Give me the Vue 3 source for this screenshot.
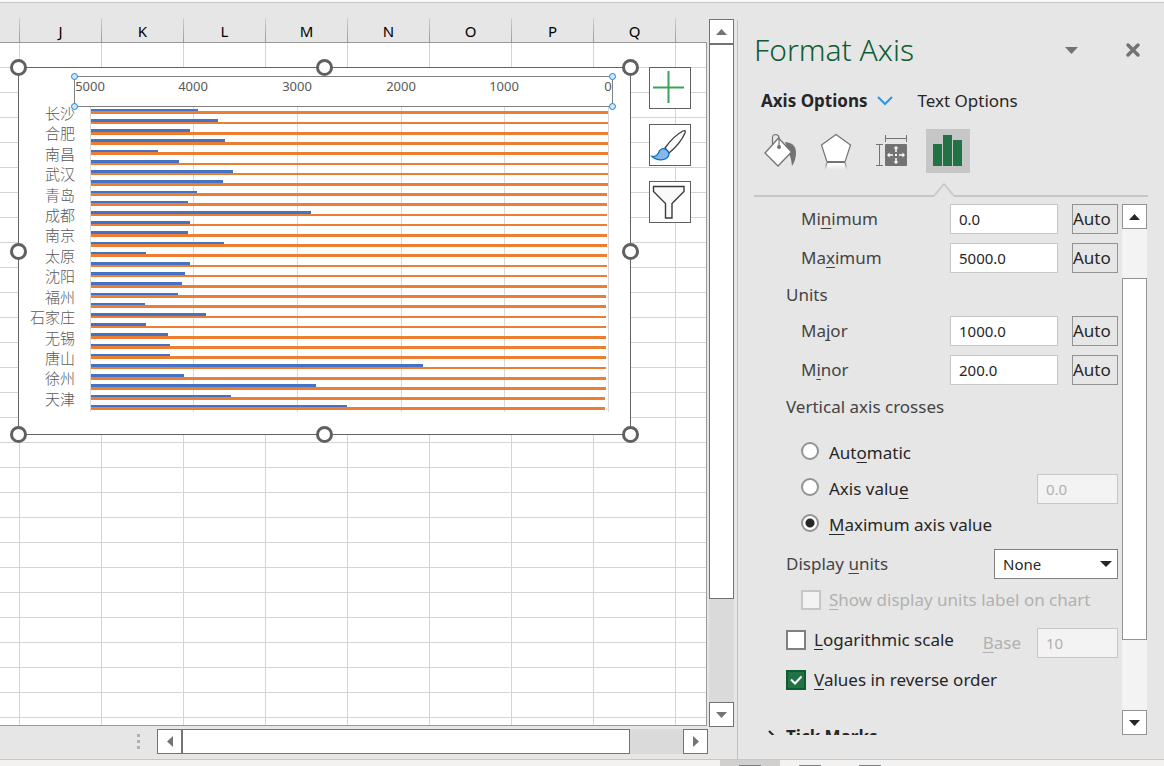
<script setup>
import { ref } from 'vue'

const columns = ['J', 'K', 'L', 'M', 'N', 'O', 'P', 'Q']

const pitch = 10.207
const barEnds = [
  198, 218, 190, 225, 158, 179, 233, 223, 197, 188, 311, 190, 188, 224, 146,
  190, 185, 182, 178, 145, 206, 146, 168, 170, 170, 423, 184, 316, 231, 347,
]
const bars = barEnds.map((end, i) => {
  const top = Math.round(108.86 + pitch * i)
  const mid = Math.round(111.48 + pitch * i)
  const bottom = Math.round(114.15 + pitch * i)
  return { top, mid, bottom, width: end - 91, full: Math.round(608.2 - 0.1 * i) - 91 }
})
const cities = ['长沙', '合肥', '南昌', '武汉', '青岛', '成都', '南京', '太原', '沈阳', '福州', '石家庄', '无锡', '唐山', '徐州', '天津']
  .map((name, i) => ({ name, y: Math.round(119 + pitch * 2 * i) }))
const ticks = [
  { x: 90, label: '5000' },
  { x: 193, label: '4000' },
  { x: 297, label: '3000' },
  { x: 401, label: '2000' },
  { x: 504, label: '1000' },
  { x: 608, label: '0' },
]
const handles = [
  [18, 67], [324, 67], [630, 67], [18, 251], [630, 251], [18, 434], [324, 434], [630, 434],
]
const axisHandles = [[74, 76], [612, 76], [74, 106], [612, 106]]

const minimum = ref('0.0')
const maximum = ref('5000.0')
const major = ref('1000.0')
const minor = ref('200.0')
const axisValue = ref('0.0')
const logBase = ref('10')
const crosses = ref('max')
const displayUnits = ref('None')
const showLabel = ref(false)
const logarithmic = ref(false)
const reversed = ref(true)
</script>

<template>
  <div class="app">
    <div class="ribbon-edge"></div>
    <main class="main">
      <section class="workbook">
        <div class="sheet-row">
          <div class="sheet">
            <div class="headers">
              <div class="header first"></div>
              <div v-for="c in columns" :key="c" class="header">{{ c }}</div>
            </div>
            <div class="cells"></div>

            <svg class="chart" width="640" height="444" viewBox="0 0 640 444" role="img" aria-label="City bar chart">
              <rect x="18.500" y="67.500" width="612" height="367" fill="#fff" stroke="#636363" />
              <g fill="#d9d9d9">
                <rect v-for="t in ticks" :key="t.x" :x="t.x" y="107" width="1" height="305" />
              </g>
              <g v-for="(b, i) in bars" :key="i" shape-rendering="crispEdges">
                <rect x="91" :y="b.top" :width="b.width" :height="b.mid - b.top" fill="#4472c4" />
                <rect x="91" :y="b.mid" :width="b.full" :height="b.bottom - b.mid" fill="#ed7d31" />
              </g>
              <g class="city">
                <text v-for="c in cities" :key="c.name" x="75" :y="c.y">{{ c.name }}</text>
              </g>
              <g class="tick">
                <text v-for="t in ticks" :key="t.label" :x="t.x" y="91">{{ t.label }}</text>
              </g>
              <rect x="74.500" y="76.500" width="538" height="30" fill="none" stroke="#7f7f7f" />
              <circle v-for="(h, i) in axisHandles" :key="'a' + i" :cx="h[0] + 0.5" :cy="h[1] + 0.5" r="3" fill="#cfe6f7" stroke="#1a86d9" />
              <circle v-for="(h, i) in handles" :key="'h' + i" :cx="h[0] + 0.5" :cy="h[1] + 0.5" r="7" fill="#fff" stroke="#606060" stroke-width="3" />
            </svg>

            <div class="chart-tools">
              <button type="button" aria-label="Chart Elements">
                <svg width="40" height="40" viewBox="0 0 40 40" fill="none" stroke="#3aa356" stroke-width="2">
                  <path d="M18.500 3V35M3 19.500H34" />
                </svg>
              </button>
              <button type="button" aria-label="Chart Styles">
                <svg width="40" height="40" viewBox="0 0 40 40">
                  <path d="M15 23C20 16 27 9 33 6Q36 4.500 35 8C32 15 25 23 19 28Z" fill="#fafafa" stroke="#3b3b3b" stroke-width="1.300" />
                  <path d="M2 31.500Q6 32 8.500 28C9.500 24 13 22.500 16 24.500Q20 27 18.500 31C16 36 7 36 2 31.500Z" fill="#83b9ea" stroke="#1068b8" stroke-width="1.300" />
                </svg>
              </button>
              <button type="button" aria-label="Chart Filters">
                <svg width="40" height="40" viewBox="0 0 40 40" fill="#fafafa" stroke="#3b3b3b" stroke-width="1.400">
                  <path d="M3.500 4.500H34V9.500L22 21.500V36H15.500V21.500L3.500 9.500Z" />
                </svg>
              </button>
            </div>
          </div>

          <div class="vscroll">
            <button type="button" aria-label="Scroll up">
              <svg width="11" height="6"><path d="M0 6L5.500 0L11 6Z" fill="#737373" /></svg>
            </button>
            <div class="thumb"></div>
            <div class="track"></div>
            <button type="button" aria-label="Scroll down">
              <svg width="11" height="6"><path d="M0 0L5.500 6L11 0Z" fill="#737373" /></svg>
            </button>
          </div>
        </div>

        <div class="hscroll">
          <div class="grip"><i></i><i></i><i></i></div>
          <button type="button" aria-label="Scroll left">
            <svg width="6" height="11"><path d="M6 0L0 5.500L6 11Z" fill="#737373" /></svg>
          </button>
          <div class="thumb"></div>
          <div class="track"></div>
          <button type="button" aria-label="Scroll right">
            <svg width="6" height="11"><path d="M0 0L6 5.500L0 11Z" fill="#737373" /></svg>
          </button>
        </div>
      </section>

      <aside class="pane">
        <header class="pane-head">
          <h1>Format Axis</h1>
          <button type="button" class="bare" aria-label="Task pane options">
            <svg width="13" height="7"><path d="M0 0H13L6.500 7Z" fill="#737373" /></svg>
          </button>
          <button type="button" class="bare" aria-label="Close">
            <svg width="16" height="16" viewBox="0 0 16 16"><path d="M3 3L13 13M13 3L3 13" stroke="#737373" stroke-width="3.500" stroke-linecap="round" /></svg>
          </button>
        </header>

        <nav class="tabs">
          <button type="button" class="bare tab active">
            Axis Options
            <svg width="16" height="10" viewBox="0 0 16 10" fill="none" stroke="#2e96dc" stroke-width="2"><path d="M1 1L8 8L15 1" /></svg>
          </button>
          <button type="button" class="bare tab">Text Options</button>
        </nav>

        <div class="categories">
          <button type="button" aria-label="Fill &amp; Line">
            <svg width="44" height="44" viewBox="0 0 44 44">
              <path d="M27 13C36 14 38 18 38 24Q38 31 34 37Q33 27 30 23Z" fill="#737373" />
              <path d="M20.500 9L33.500 23L20 37L7 24Z" fill="#fff" stroke="#737373" stroke-width="1.300" />
              <path d="M14.500 16V8.500Q14.500 5.500 18 5.500Q21 6 21 9V17" fill="none" stroke="#737373" stroke-width="1.200" />
              <circle cx="21" cy="18" r="2" fill="#737373" />
            </svg>
          </button>
          <button type="button" aria-label="Effects">
            <svg width="44" height="44" viewBox="0 0 44 44">
              <defs>
                <linearGradient id="fade" x1="0" y1="0" x2="0" y2="1">
                  <stop offset="0" stop-color="#fff" />
                  <stop offset="1" stop-color="#fff" stop-opacity="0" />
                </linearGradient>
                <linearGradient id="fadeline" x1="0" y1="0" x2="0" y2="1">
                  <stop offset="0" stop-color="#8a8a8a" />
                  <stop offset="1" stop-color="#8a8a8a" stop-opacity="0" />
                </linearGradient>
              </defs>
              <path d="M13 34H31L33 41H11Z" fill="url(#fade)" />
              <path d="M12 34H13.500L12 41H10.500ZM32 34H30.500L32 41H33.500Z" fill="url(#fadeline)" />
              <path d="M22 5.500L36.500 16L31 33H13L7.500 16Z" fill="#fff" stroke="#737373" stroke-width="1.200" />
              <path d="M13 33H31" stroke="#737373" stroke-width="2" />
            </svg>
          </button>
          <button type="button" aria-label="Size &amp; Properties">
            <svg width="44" height="44" viewBox="0 0 44 44">
              <path d="M15.500 6V13M36.500 6V13M15.500 9.500H36.500M6 15.500H13M6 36.500H13M9.500 15.500V36.500" stroke="#737373" fill="none" />
              <rect x="15" y="15" width="22" height="22" rx="1" fill="#737373" />
              <path d="M26 18V23M26 29V34M18 26H23M29 26H34" stroke="#fff" stroke-width="1.500" />
              <path d="M23.500 19.500L26 17L28.500 19.500ZM23.500 32.500L26 35L28.500 32.500ZM19.500 23.500L17 26L19.500 28.500ZM32.500 23.500L35 26L32.500 28.500Z" fill="#fff" />
              <rect x="25" y="25" width="2" height="2" fill="#fff" />
            </svg>
          </button>
          <button type="button" class="active" aria-label="Axis Options">
            <svg width="44" height="44" viewBox="0 0 44 44" fill="#217346">
              <rect x="7" y="15" width="9" height="22" />
              <rect x="17" y="6" width="9" height="31" />
              <rect x="27" y="11" width="9" height="26" />
            </svg>
          </button>
        </div>

        <div class="divider">
          <span class="rule short"></span>
          <svg width="20" height="14" viewBox="0 0 20 14" fill="none" stroke="#c6c6c6" stroke-width="1.500"><path d="M0 13L10 1L20 13" /></svg>
          <span class="rule"></span>
        </div>

        <div class="body">
          <form class="options" @submit.prevent>
            <div class="field">
              <label class="in" for="min">Mi<u>n</u>imum</label>
              <input id="min" v-model="minimum" type="text" />
              <button type="button">Auto</button>
            </div>
            <div class="field gap">
              <label class="in" for="max">Ma<u>x</u>imum</label>
              <input id="max" v-model="maximum" type="text" />
              <button type="button">Auto</button>
            </div>
            <div class="caption">Units</div>
            <div class="field">
              <label class="in" for="major">Ma<u>j</u>or</label>
              <input id="major" v-model="major" type="text" />
              <button type="button">Auto</button>
            </div>
            <div class="field gap">
              <label class="in" for="minor">M<u>i</u>nor</label>
              <input id="minor" v-model="minor" type="text" />
              <button type="button">Auto</button>
            </div>
            <div class="caption">Vertical axis crosses</div>
            <div class="radios">
              <label class="choice in"><input v-model="crosses" type="radio" name="crosses" value="auto" /><span>Aut<u>o</u>matic</span></label>
              <div class="pair">
                <label class="choice in"><input v-model="crosses" type="radio" name="crosses" value="value" /><span>Axis valu<u>e</u></span></label>
                <input v-model="axisValue" class="small" type="text" aria-label="Axis value" disabled />
              </div>
              <label class="choice in"><input v-model="crosses" type="radio" name="crosses" value="max" /><span><u>M</u>aximum axis value</span></label>
            </div>
            <div class="field">
              <label for="units">Display <u>u</u>nits</label>
              <span class="select">
                <select id="units" v-model="displayUnits">
                  <option>None</option>
                  <option>Hundreds</option>
                  <option>Thousands</option>
                </select>
                <svg width="12" height="6"><path d="M0 0H12L6 6Z" fill="#262626" /></svg>
              </span>
            </div>
            <label class="choice in tall off"><input v-model="showLabel" type="checkbox" disabled /><span><u>S</u>how display units label on chart</span></label>
            <div class="pair log">
              <label class="choice"><input v-model="logarithmic" type="checkbox" /><span><u>L</u>ogarithmic scale</span></label>
              <div class="base">
                <label for="base"><u>B</u>ase</label>
                <input id="base" v-model="logBase" class="small" type="text" disabled />
              </div>
            </div>
            <label class="choice tall">
              <span class="box">
                <input v-model="reversed" type="checkbox" />
                <svg v-if="reversed" width="20" height="20" viewBox="0 0 20 20" fill="none" stroke="#fff" stroke-width="2"><path d="M5 9.500L9 13.500L15.500 6.500" /></svg>
              </span>
              <span><u>V</u>alues in reverse order</span>
            </label>
            <button type="button" class="bare section">
              <svg width="8" height="14" viewBox="0 0 8 14" fill="none" stroke="#262626" stroke-width="2"><path d="M1 1L7 7L1 13" /></svg>
              Tick Marks
            </button>
          </form>
          <div class="pscroll">
            <button type="button" aria-label="Scroll up">
              <svg width="11" height="6"><path d="M0 6L5.500 0L11 6Z" fill="#262626" /></svg>
            </button>
            <div class="before"></div>
            <div class="thumb"></div>
            <div class="after"></div>
            <button type="button" aria-label="Scroll down">
              <svg width="11" height="6"><path d="M0 0L5.500 6L11 0Z" fill="#262626" /></svg>
            </button>
          </div>
        </div>
      </aside>
    </main>

    <footer class="status">
      <span class="view active"><i></i></span>
      <span class="view"><i></i></span>
      <span class="view"><i></i></span>
    </footer>
  </div>
</template>

<style>
body {
  margin: 0;
  overflow: hidden;
}
</style>

<style scoped>
* {
  box-sizing: border-box;
}
.app {
  display: flex;
  flex-direction: column;
  height: 100vh;
  background: #e6e6e6;
  color: #262626;
  font-family: 'Noto Sans', 'Open Sans', 'Noto Sans CJK SC', sans-serif;
  font-size: 17px;
  line-height: 24px;
}
svg {
  display: block;
  flex: none;
}
button,
input,
select {
  font: inherit;
  color: inherit;
  margin: 0;
  padding: 0;
  border-radius: 0;
}
u {
  text-decoration-thickness: 1px;
  text-underline-offset: 3px;
  text-decoration-skip-ink: none;
}
.bare {
  background: none;
  border: 0;
}
.ribbon-edge {
  height: 3px;
  flex: none;
  background: #fafafa;
  border-bottom: 1px solid #c6c6c6;
}
.main {
  flex: 1;
  min-height: 0;
  display: flex;
}

/* Worksheet */
.workbook {
  flex: 1;
  min-width: 0;
  display: flex;
  flex-direction: column;
}
.sheet-row {
  flex: 1;
  min-height: 0;
  display: flex;
}
.sheet {
  position: relative;
  flex: 1;
  min-width: 0;
  display: flex;
  flex-direction: column;
  border-bottom: 1px solid #999;
}
.headers {
  display: flex;
  height: 40px;
  flex: none;
  padding-top: 15px;
  border-bottom: 1px solid #999;
  overflow: hidden;
}
.header {
  width: 82px;
  flex: none;
  border-right: 1px solid;
  border-image: linear-gradient(#d0d0d0, #999) 1;
  text-align: center;
  color: #000;
  font-size: 15px;
  line-height: 26px;
}
.header.first {
  width: 20px;
}
.cells {
  flex: 1;
  border-right: 1px solid #999;
  background:
    repeating-linear-gradient(90deg, transparent 0 19px, #d4d4d4 19px 20px, transparent 20px 82px),
    repeating-linear-gradient(#fff 0 24px, #d4d4d4 24px 25px);
}
.chart {
  position: absolute;
  left: 0;
  top: -3px;
}
.city text {
  font-family: 'Noto Sans CJK SC', sans-serif;
  font-size: 15px;
  font-weight: 300;
  fill: #595959;
  text-anchor: end;
}
.tick text {
  font-size: 13px;
  fill: #595959;
  text-anchor: middle;
}
.chart-tools {
  position: absolute;
  left: 649px;
  top: 64px;
  display: grid;
  gap: 15px;
}
.chart-tools button {
  width: 42px;
  height: 42px;
  background: #fff;
  border: 1px solid #606060;
}

/* Scroll bars */
.vscroll {
  width: 25px;
  flex: none;
  margin: 16px 3px -1px 2px;
  display: flex;
  flex-direction: column;
  background: #dadada;
}
.vscroll button,
.hscroll button,
.pscroll button {
  width: 25px;
  height: 25px;
  flex: none;
  display: grid;
  place-items: center;
  background: #fff;
  border: 1px solid #737373;
}
.vscroll .thumb {
  flex: 555;
  background: #fff;
  border: 1px solid #737373;
}
.vscroll .track {
  flex: 103;
}
.hscroll {
  display: flex;
  flex: none;
  height: 25px;
  margin: 3px 29px 5px 0;
}
.hscroll .grip {
  flex: 0 0 157px;
  display: grid;
  align-content: center;
  justify-content: end;
  gap: 3px;
  padding-right: 17px;
}
.grip i {
  width: 3px;
  height: 3px;
  background: #b1b1b1;
}
.hscroll .thumb {
  flex: 448;
  background: #fff;
  border: 1px solid #737373;
}
.hscroll .track {
  flex: 53;
  background: #dadada;
}

/* Task pane */
.pane {
  flex: none;
  width: 427px;
  display: flex;
  flex-direction: column;
  padding: 0 16px 24px;
  border-left: 1px solid #c0c0c0;
  margin-top: 17px;
}
.pane-head {
  display: flex;
  align-items: center;
  height: 60px;
}
h1 {
  flex: 1;
  margin: 0;
  font-size: 30px;
  line-height: 40px;
  font-weight: 300;
  color: #0f5c32;
}
.pane-head .bare + .bare {
  margin: 0 7px 0 47px;
}
.tabs {
  display: flex;
  height: 42px;
  align-items: center;
  padding-left: 7px;
  gap: 25px;
}
.tab {
  display: flex;
  align-items: center;
  gap: 9px;
}
.tab.active {
  font-weight: 700;
}
.categories {
  display: flex;
  gap: 12px;
  margin-top: 7px;
  padding-left: 4px;
}
.categories button {
  width: 44px;
  height: 44px;
  background: none;
  border: 0;
}
.categories .active {
  background: #c6c6c6;
}
.divider {
  display: flex;
  align-items: flex-end;
  margin: 10px 0 7px;
}
.rule {
  flex: 1;
  height: 2px;
  background: #c6c6c6;
}
.rule.short {
  flex: 0 0 180px;
}
.body {
  flex: 1;
  min-height: 0;
  display: flex;
  gap: 4px;
  padding-right: 1px;
  overflow: hidden;
}
.options {
  flex: 1;
  padding-left: 32px;
  overflow: hidden;
}
.field {
  display: flex;
  align-items: center;
  height: 30px;
  color: #444;
}
.field.gap {
  margin-top: 9px;
}
.field label {
  flex: 1;
}
.in {
  padding-left: 15px;
}
input[type='text'],
select {
  width: 108px;
  height: 30px;
  padding: 0 8px;
  background: #fff;
  border: 1px solid #c6c6c6;
  color: #262626;
  font-size: 15px;
}
input.small {
  width: 81px;
}
input[type='text']:disabled {
  background: #f3f3f3;
  color: #b1b1b1;
}
.field button {
  width: 46px;
  height: 30px;
  margin-left: 14px;
  background: #e6e6e6;
  border: 1px solid #939393;
  color: #262626;
  text-align: left;
}
.caption {
  height: 43px;
  line-height: 43px;
  color: #444;
}
.radios {
  padding: 7px 0 6px;
}
.choice {
  display: flex;
  align-items: center;
  gap: 8px;
  height: 36px;
}
.choice.tall {
  height: 42px;
}
.off {
  color: #b1b1b1;
}
.pair {
  display: flex;
  justify-content: space-between;
  align-items: center;
}
input[type='radio'],
input[type='checkbox'] {
  appearance: none;
  flex: none;
  display: block;
  background: #fff;
}
input[type='radio'] {
  width: 18px;
  height: 18px;
  margin: 0 2px 4px 0;
  border: 2px solid #939393;
  border-radius: 50%;
}
input[type='radio']:checked {
  background: radial-gradient(circle, #262626 0 4px, #fff 5px);
}
input[type='checkbox'] {
  width: 20px;
  height: 20px;
  border: 2px solid #808080;
}
input[type='checkbox']:disabled {
  background: #f3f3f3;
  border-color: #c6c6c6;
}
input[type='checkbox']:checked {
  background: #217346;
  border-color: #0e5c2f;
}
.box {
  display: grid;
}
.box > * {
  grid-area: 1 / 1;
  z-index: 1;
}
.select {
  display: grid;
  align-items: center;
}
.select > * {
  grid-area: 1 / 1;
}
.select svg {
  justify-self: end;
  margin-right: 6px;
  pointer-events: none;
}
select {
  appearance: none;
  width: 124px;
  border-color: #808080;
}
.log {
  height: 38px;
}
.base {
  display: flex;
  align-items: center;
  gap: 16px;
  padding-top: 6px;
  color: #b1b1b1;
}
.section {
  display: flex;
  align-items: center;
  gap: 10px;
  height: 72px;
  margin-left: -18px;
  font-weight: 700;
}
.pscroll {
  width: 25px;
  flex: none;
  display: flex;
  flex-direction: column;
  background: #f3f3f3;
}
.pscroll button,
.pscroll .thumb {
  border: 1px solid #939393;
  background: #fff;
}
.pscroll .before {
  flex: 49;
}
.pscroll .thumb {
  flex: 361;
}
.pscroll .after {
  flex: 70;
}

/* Status bar */
.status {
  display: flex;
  flex: none;
  justify-content: flex-end;
  height: 7px;
  padding-right: 264px;
  background: #f3f2f1;
  border-top: 1px solid #c6c6c6;
}
.view {
  width: 60px;
  display: flex;
  align-items: flex-end;
  justify-content: center;
}
.view.active {
  background: #d2d0ce;
}
.view i {
  width: 22px;
  height: 1px;
  background: #808080;
}
</style>
